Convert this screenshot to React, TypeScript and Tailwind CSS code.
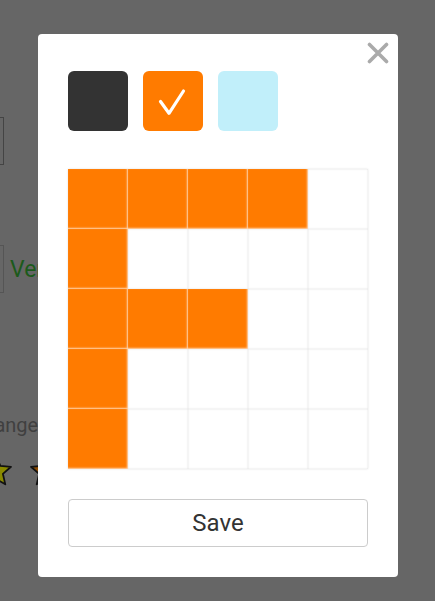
import React from "react";

const ON = [
  [1, 1, 1, 1, 0],
  [1, 0, 0, 0, 0],
  [1, 1, 1, 0, 0],
  [1, 0, 0, 0, 0],
  [1, 0, 0, 0, 0],
];

function Star({ fill }: { fill: string }) {
  return (
    <svg width="36" height="36" viewBox="0 0 24 24">
      <path
        d="M12 2l2.9 6.6 7.1.6-5.4 4.7 1.6 7-6.2-3.7-6.2 3.7 1.6-7L2 9.2l7.1-.6z"
        fill={fill}
        stroke="#111"
        strokeWidth="1.2"
        strokeLinejoin="round"
      />
    </svg>
  );
}

export default function App() {
  return (
    <div
      className="relative w-[435px] h-[601px] overflow-hidden bg-[#666666]"
      style={{ fontFamily: "Roboto, 'Liberation Sans', sans-serif" }}
    >
      {/* background page content (dimmed) */}
      <div className="flex flex-col pt-[117px]">
        <div className="w-[4px] h-[48px] border border-l-0 border-[#444]" />
        <div className="mt-[80px] flex items-center gap-[6px]">
          <div className="w-[4px] h-[48px] border border-l-0 border-[#555]" />
          <span className="text-[23px] text-[#1b5a1b] leading-none">Verify</span>
        </div>
        <div className="mt-[122px] ml-[-12px] text-[20px] text-[#404040] leading-none">range)</div>
        <div className="mt-[18px] ml-[-22px] flex gap-[14px]">
          <Star fill="#8a8a00" />
          <Star fill="#8a4a00" />
        </div>
      </div>

      {/* modal */}
      <div className="absolute left-[38px] top-[34px] w-[360px] h-[543px] bg-white rounded-[4px] px-[30px] pt-[37px] pb-[30px] flex flex-col">
        <button className="absolute right-[9px] top-[8px] w-[22px] h-[22px] flex items-center justify-center">
          <svg width="22" height="22" viewBox="0 0 22 22">
            <path d="M2.5 2.5L19.5 19.5M19.5 2.5L2.5 19.5" stroke="#aaaaaa" strokeWidth="3.6" strokeLinecap="round" />
          </svg>
        </button>
        <div className="flex gap-[15px]">
          <div className="w-[60px] h-[60px] rounded-[6px] bg-[#333333]" />
          <div className="w-[60px] h-[60px] rounded-[6px] bg-[#ff7b00] flex items-center justify-center">
            <svg width="60" height="60" viewBox="0 0 60 60">
              <path d="M17.5 30.5L26 42.3L40.5 20" stroke="#ffffff" strokeWidth="3.2" fill="none" strokeLinecap="round" strokeLinejoin="round" />
            </svg>
          </div>
          <div className="w-[60px] h-[60px] rounded-[6px] bg-[#c1effa]" />
        </div>

        <div className="mt-[38px] grid grid-cols-5 w-[300px] h-[300px] shadow-[0_0_2px_rgba(0,0,0,0.12)]">
          {ON.flatMap((row, r) =>
            row.map((v, c) => (
              <div
                key={`${r}-${c}`}
                className={
                  v
                    ? "w-[60px] h-[60px] bg-[#ff7b00] shadow-[inset_-1px_-1px_2px_rgba(255,255,255,0.7)]"
                    : "w-[60px] h-[60px] bg-white shadow-[inset_0_0_2px_rgba(0,0,0,0.15)]"
                }
              />
            ))
          )}
        </div>

        <button className="mt-[30px] w-[300px] h-[48px] border border-[#cccccc] rounded-[4px] bg-white text-[24px] text-[#333333] flex items-center justify-center">
          Save
        </button>
      </div>
    </div>
  );
}
